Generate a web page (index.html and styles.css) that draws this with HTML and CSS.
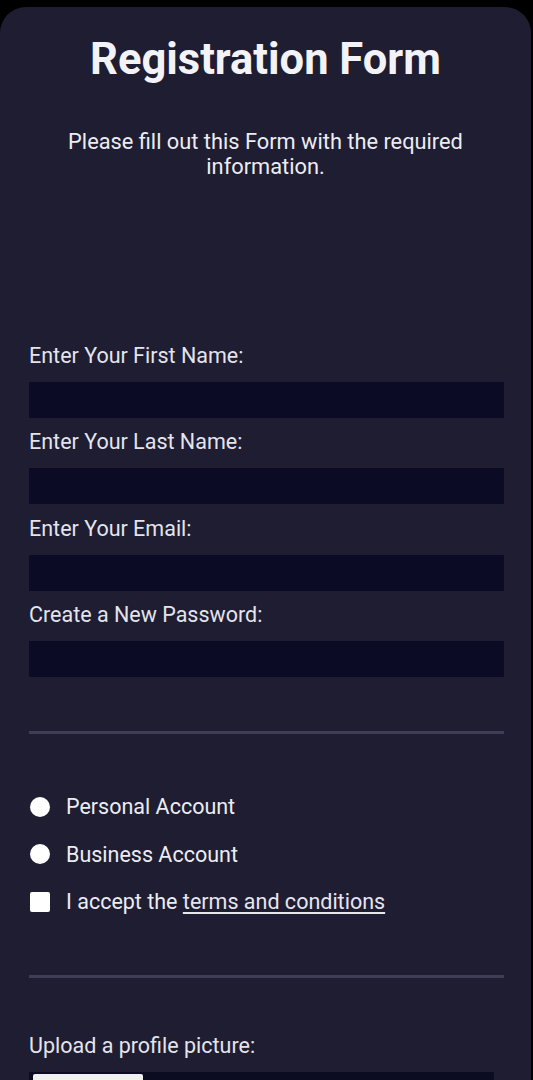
FILE: index.html
```html
<!DOCTYPE html>
<html lang="en">
<head>
<meta charset="utf-8">
<title>Registration Form</title>
<link rel="stylesheet" href="styles.css">
</head>
<body>
<main class="card">
  <h1 class="title">Registration Form</h1>
  <p class="subtitle">Please fill out this Form with the required information.</p>
  <form class="form">
    <div class="fields">
      <label class="field">
        <span class="label">Enter Your First Name:</span>
        <input class="input" type="text">
      </label>
      <label class="field">
        <span class="label">Enter Your Last Name:</span>
        <input class="input" type="text">
      </label>
      <label class="field">
        <span class="label">Enter Your Email:</span>
        <input class="input" type="email">
      </label>
      <label class="field">
        <span class="label">Create a New Password:</span>
        <input class="input" type="password">
      </label>
    </div>
    <hr class="divider divider-top">
    <div class="options">
      <label class="option"><input class="radio" type="radio" name="acct"> <span>Personal Account</span></label>
      <label class="option"><input class="radio" type="radio" name="acct"> <span>Business Account</span></label>
      <label class="option"><input class="check" type="checkbox"> <span>I accept the <a class="link" href="#">terms and conditions</a></span></label>
    </div>
    <hr class="divider divider-bottom">
    <div class="upload">
      <span class="label">Upload a profile picture:</span>
      <div class="file-box"><span class="file-btn"></span></div>
    </div>
  </form>
</main>
</body>
</html>
```
FILE: styles.css
```css
html, body {
  margin: 0;
  padding: 0;
  background: #000;
  height: 1080px;
  overflow: hidden;
}
body {
  font-family: Roboto, "Liberation Sans", sans-serif;
  color: #eeeef4;
  padding-top: 7px;
  box-sizing: border-box;
}
.card {
  background: #1e1d31;
  border-radius: 26px 26px 0 0;
  margin-right: 2px;
  padding: 0 29px 0 29px;
  min-height: 1100px;
  box-sizing: border-box;
}
.title {
  margin: 0;
  padding-top: 30px;
  text-align: center;
  font-size: 43.5px;
  font-weight: 700;
  line-height: 46px;
  color: #f3f3f7;
}
.subtitle {
  margin: 46px 0 0;
  text-align: center;
  font-size: 21.8px;
  line-height: 25px;
  color: #ececf2;
}
.form {
  margin-top: 165px;
}
.fields {
  display: flex;
  flex-direction: column;
  gap: 12.4px;
}
.field {
  display: flex;
  flex-direction: column;
  gap: 15px;
}
.label {
  font-size: 21.5px;
  line-height: 23px;
  color: #e4e4ec;
}
.input {
  display: block;
  width: 475px;
  height: 36px;
  margin: 0;
  border: none;
  padding: 0;
  background: #0b0b26;
  outline: none;
}
.divider {
  border: none;
  height: 3px;
  background: #3f3e57;
  margin: 0;
  width: 475px;
}
.divider-top {
  margin-top: 54px;
}
.options {
  margin-top: 61px;
  display: flex;
  flex-direction: column;
  gap: 24.5px;
}
.option {
  display: flex;
  align-items: center;
  gap: 16px;
  font-size: 21.5px;
  line-height: 23px;
  color: #ececf2;
}
.radio, .check {
  appearance: none;
  -webkit-appearance: none;
  margin: 0 0 0 1px;
  width: 20px;
  height: 20px;
  background: #fff;
  border: none;
  flex: none;
}
.radio {
  border-radius: 50%;
}
.check {
  border-radius: 2px;
}
.link {
  color: #e6e6ee;
  text-decoration: underline;
  text-underline-offset: 3px;
}
.divider-bottom {
  margin-top: 62px;
}
.upload {
  margin-top: 56px;
  display: flex;
  flex-direction: column;
  gap: 15px;
}
.file-box {
  width: 465px;
  height: 36px;
  background: #0b0b22;
  padding: 2px 4px;
  box-sizing: border-box;
}
.file-btn {
  display: block;
  width: 110px;
  height: 30px;
  background: #f0f0f0;
  border-radius: 2px;
}
```
